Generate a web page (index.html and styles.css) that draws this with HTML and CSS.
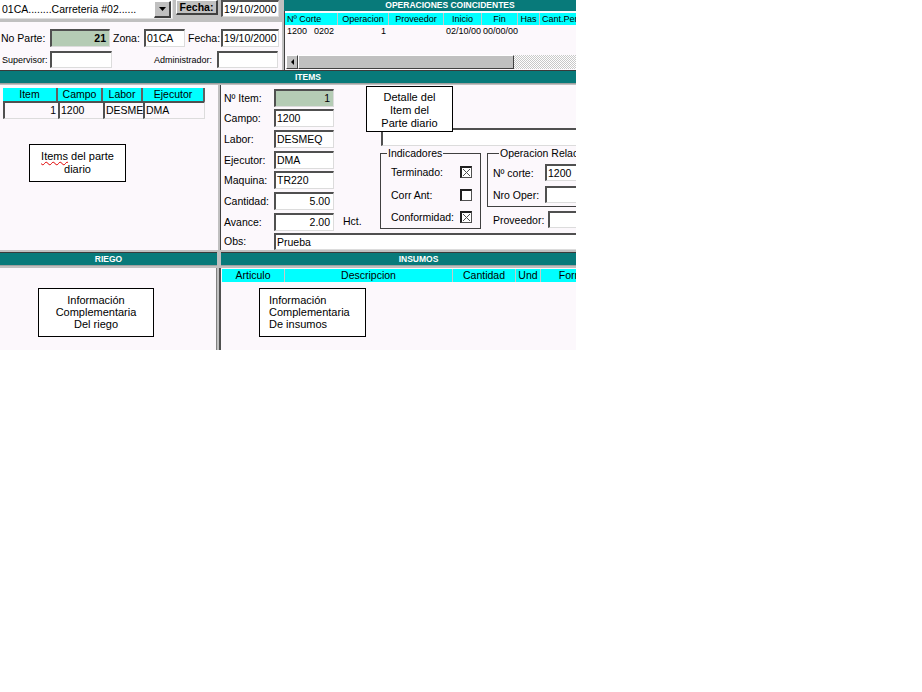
FILE: index.html
```html
<!DOCTYPE html>
<html lang="es">
<head>
    <meta charset="UTF-8">
    <title>Parte diario</title>
    <link rel="stylesheet" href="styles.css">
</head>
<body>
<div class="screen">
    <div class="app">

        <!-- cabecera del parte + operaciones -->
        <div class="top">
            <div class="parte">
                <div class="toolbar">
                    <div class="combo">
                        <span class="combo-text">01CA........Carreteria #02......</span>
                        <span class="combo-btn"><svg width="7" height="4" viewBox="0 0 7 4"><polygon points="0,0 7,0 3.5,4" fill="#000"/></svg></span>
                    </div>
                    <div class="btn">Fecha:</div>
                    <div class="field date">19/10/2000</div>
                </div>
                <div class="parte-body">
                    <div class="parte-row">
                        <span class="lbl lbl-parte">No Parte:</span>
                        <div class="field green num w-parte"><b>21</b></div>
                        <span class="lbl lbl-zona">Zona:</span>
                        <div class="field w-zona">01CA</div>
                        <span class="lbl lbl-fecha">Fecha:</span>
                        <div class="field w-fecha">19/10/2000</div>
                    </div>
                    <div class="parte-row second">
                        <span class="lbl lbl-sup">Supervisor:</span>
                        <div class="field w-sup"></div>
                        <span class="lbl lbl-adm">Administrador:</span>
                        <div class="field w-adm"></div>
                    </div>
                </div>
            </div>

            <div class="ops">
                <div class="bar bar-ops">OPERACIONES COINCIDENTES</div>
                <div class="ops-grid">
                    <div class="ops-head">
                        <span class="left">Nº Corte</span>
                        <span>Operacion</span>
                        <span>Proveedor</span>
                        <span>Inicio</span>
                        <span>Fin</span>
                        <span>Has</span>
                        <span class="left">Cant.Per</span>
                    </div>
                    <div class="ops-row">
                        <span class="left">1200<span class="sub">0202</span></span>
                        <span class="right">1</span>
                        <span></span>
                        <span class="left">02/10/00</span>
                        <span class="tight">00/00/00</span>
                        <span></span>
                        <span></span>
                    </div>
                    <div class="hscroll">
                        <span class="sb-btn"><svg width="3" height="6" viewBox="0 0 3 6"><polygon points="3,0 3,6 0,3" fill="#000"/></svg></span>
                        <span class="sb-thumb"></span>
                        <span class="sb-track"></span>
                    </div>
                </div>
            </div>
        </div>

        <!-- items -->
        <div class="bar items-bar">ITEMS</div>
        <div class="items">
            <div class="items-list">
                <div class="igrid">
                    <span class="ih">Item</span>
                    <span class="ih">Campo</span>
                    <span class="ih">Labor</span>
                    <span class="ih">Ejecutor</span>
                    <span class="ic num">1</span>
                    <span class="ic">1200</span>
                    <span class="ic">DESME</span>
                    <span class="ic last">DMA</span>
                </div>
                <div class="note note-items"><span class="spell">Items</span> del parte<br>diario</div>
            </div>

            <div class="items-detail">
                <div class="detail-top">
                    <div class="fields">
                        <span class="lbl">Nº Item:</span>
                        <div class="field green num">1</div>
                        <span class="lbl">Campo:</span>
                        <div class="field">1200</div>
                        <span class="lbl">Labor:</span>
                        <div class="field">DESMEQ</div>
                        <span class="lbl">Ejecutor:</span>
                        <div class="field">DMA</div>
                        <span class="lbl">Maquina:</span>
                        <div class="field">TR220</div>
                        <span class="lbl">Cantidad:</span>
                        <div class="field num">5.00</div>
                        <span class="lbl">Avance:</span>
                        <div class="field num">2.00</div>
                    </div>
                    <div class="hct">Hct.</div>
                    <div class="detail-right">
                        <div class="field line-box"></div>
                        <div class="groups">
                            <fieldset class="grp grp-ind">
                                <legend>Indicadores</legend>
                                <div class="chk-row">
                                    <span>Terminado:</span>
                                    <span class="chk"><svg width="9" height="9" viewBox="0 0 9 9"><path d="M1 1L8 8M8 1L1 8" stroke="#505050" stroke-width="1"/></svg></span>
                                </div>
                                <div class="chk-row">
                                    <span>Corr Ant:</span>
                                    <span class="chk"></span>
                                </div>
                                <div class="chk-row">
                                    <span>Conformidad:</span>
                                    <span class="chk"><svg width="9" height="9" viewBox="0 0 9 9"><path d="M1 1L8 8M8 1L1 8" stroke="#505050" stroke-width="1"/></svg></span>
                                </div>
                            </fieldset>
                            <div class="grp-col">
                                <fieldset class="grp grp-op">
                                    <legend>Operacion Relacionada</legend>
                                    <div class="op-row">
                                        <span class="lbl">Nº corte:</span>
                                        <div class="field">1200</div>
                                    </div>
                                    <div class="op-row">
                                        <span class="lbl">Nro Oper:</span>
                                        <div class="field"></div>
                                    </div>
                                </fieldset>
                                <div class="prov-row">
                                    <span class="lbl">Proveedor:</span>
                                    <div class="field"></div>
                                </div>
                            </div>
                        </div>
                    </div>
                </div>
                <div class="obs-row">
                    <span class="lbl">Obs:</span>
                    <div class="field obs">Prueba</div>
                </div>
                <div class="note note-detail">Detalle del<br>Item del<br>Parte diario</div>
            </div>
        </div>

        <!-- riego / insumos -->
        <div class="bottom">
            <div class="riego">
                <div class="bar">RIEGO</div>
                <div class="panel riego-panel">
                    <div class="note note-riego">Información<br>Complementaria<br>Del riego</div>
                </div>
            </div>
            <div class="insumos">
                <div class="bar">INSUMOS</div>
                <div class="panel insumos-panel">
                    <div class="ins-head">
                        <span>Articulo</span>
                        <span>Descripcion</span>
                        <span>Cantidad</span>
                        <span>Und</span>
                        <span>Formula</span>
                    </div>
                    <div class="note note-ins">Información<br>Complementaria<br>De insumos</div>
                </div>
            </div>
        </div>

    </div>
</div>
</body>
</html>
```

FILE: styles.css
```css
body {
    margin: 0;
    background: #fff;
    font-family: "Liberation Sans", Arial, sans-serif;
    font-size: 10.5px;
    color: #000;
}

.screen {
    width: 576px;
    height: 350px;
    overflow: hidden;
    background: #c0c0c0;
}

/* the original window is a bit wider than the capture */
.app {
    width: 616px;
    height: 350px;
    display: flex;
    flex-direction: column;
}

/* common controls */
.field {
    box-sizing: border-box;
    height: 18px;
    background: #fff;
    border-style: solid;
    border-width: 2px 1px 1px 2px;
    border-color: #505050 #dcdcdc #dcdcdc #505050;
    padding: 0 1px;
    line-height: 15px;
    white-space: nowrap;
    overflow: hidden;
}

.field.num {
    text-align: right;
    padding-right: 3px;
}

.field.green {
    background: #b5ccb5;
}

.lbl {
    white-space: nowrap;
}

.bar {
    height: 12px;
    line-height: 12px;
    background: #087a7a;
    color: #fff;
    font-size: 8.5px;
    font-weight: bold;
    text-align: center;
    border-top: 1px solid #3a3a3a;
    border-bottom: 1px solid #a0a0a0;
}

.panel {
    background: #fcf8fc;
}

.note {
    position: absolute;
    box-sizing: border-box;
    background: #fff;
    border: 1px solid #000;
    font-size: 11px;
    line-height: 13px;
    text-align: center;
}

/* top area */
.top {
    display: flex;
    gap: 2px;
    height: 70px;
}

.parte {
    width: 282px;
    display: flex;
    flex-direction: column;
}

.toolbar {
    height: 22px;
    display: flex;
    align-items: flex-start;
}

.combo {
    box-sizing: border-box;
    width: 173px;
    height: 19px;
    background: #fff;
    border-right: 1px solid #e0e0e0;
    border-bottom: 1px solid #e0e0e0;
    display: flex;
    align-items: center;
    justify-content: space-between;
}

.combo-text {
    padding-left: 2px;
    white-space: nowrap;
}

.combo-btn {
    box-sizing: border-box;
    width: 17px;
    height: 17px;
    margin-right: 1px;
    background: #c0c0c0;
    border-style: solid;
    border-width: 1px 2px 2px 1px;
    border-color: #fff #404040 #404040 #fff;
    display: flex;
    align-items: center;
    justify-content: center;
}

.btn {
    box-sizing: border-box;
    width: 42px;
    height: 15px;
    margin-left: 3px;
    background: #c0c0c0;
    border-style: solid;
    border-width: 1px 2px 2px 1px;
    border-color: #fff #404040 #404040 #fff;
    font-weight: bold;
    text-align: center;
    line-height: 12px;
}

.date {
    width: 58px;
    height: 17px;
    margin-left: 3px;
    line-height: 14px;
}

.parte-body {
    flex: 1;
    box-sizing: border-box;
    padding-top: 7px;
    background: #fcf8fc;
}

.parte-row {
    display: flex;
    align-items: center;
    height: 18px;
}

.parte-row.second {
    height: 17px;
    margin-top: 4px;
    font-size: 9px;
}

.parte-row.second .field {
    height: 17px;
}

.lbl-parte { width: 49px; padding-left: 1px; }
.w-parte { width: 60px; }
.lbl-zona { width: 31px; margin-left: 3px; }
.w-zona { width: 41px; }
.lbl-fecha { width: 33px; margin-left: 3px; }
.w-fecha { width: 58px; }
.lbl-sup { width: 48px; padding-left: 2px; }
.w-sup { width: 62px; }
.lbl-adm { width: 100px; padding-right: 5px; text-align: right; }
.w-adm { width: 61px; }

/* operaciones coincidentes */
.ops {
    flex: 1;
    display: flex;
    flex-direction: column;
}

.bar-ops {
    height: 11px;
    line-height: 11px;
    border-top: 0;
    border-bottom: 0;
}

.ops-grid {
    flex: 1;
    display: flex;
    flex-direction: column;
    background: #fcf8fc;
    border-left: 1px solid #404040;
    font-size: 9px;
}

.ops-head,
.ops-row {
    display: grid;
    grid-template-columns: 53px 51px 55px 38px 36px 22px 1fr;
}

.ops-head {
    margin-top: 2px;
    height: 12px;
    line-height: 12px;
    background: #00ffff;
}

.ops-head span {
    text-align: center;
    border-right: 1px solid #c8c8c8;
    white-space: nowrap;
}

.ops-row {
    height: 13px;
    line-height: 13px;
    white-space: nowrap;
}

.ops-head .left,
.ops-row .left {
    text-align: left;
    padding-left: 2px;
}

.ops-row .right {
    text-align: right;
    padding-right: 3px;
}

.ops-row .tight {
    padding-left: 1px;
}

.ops-row .sub {
    margin-left: 7px;
}

.hscroll {
    margin-top: auto;
    margin-bottom: 1px;
    height: 14px;
    display: flex;
}

.sb-btn,
.sb-thumb {
    box-sizing: border-box;
    background: #c0c0c0;
    border: 1px solid;
    border-color: #fff #404040 #404040 #fff;
}

.sb-btn {
    width: 12px;
    margin-left: 1px;
    display: flex;
    align-items: center;
    justify-content: center;
}

.sb-thumb {
    width: 216px;
}

.sb-track {
    flex: 1;
    background: repeating-conic-gradient(#c8c8c8 0 25%, #fff 0 50%) 0 0 / 2px 2px;
}

/* items */
.items {
    display: flex;
    gap: 2px;
    height: 165px;
    margin-top: 1px;
}

.items-list {
    position: relative;
    width: 218px;
    background: #fcf8fc;
}

.igrid {
    display: grid;
    grid-template-columns: 55px 45px 40px 62px;
    margin: 3px 0 0 3px;
    width: max-content;
}

.ih {
    box-sizing: border-box;
    height: 13px;
    line-height: 13px;
    background: #00ffff;
    text-align: center;
    border-right: 2px solid #606060;
}

.ic {
    box-sizing: border-box;
    height: 18px;
    line-height: 15px;
    padding: 0 1px;
    border-style: solid;
    border-width: 2px 0 1px 2px;
    border-color: #505050 #dcdcdc #dcdcdc #505050;
    white-space: nowrap;
    overflow: hidden;
}

.ic.num {
    text-align: right;
    padding-right: 2px;
}

.ic.last {
    border-right-width: 1px;
}

.note-items {
    left: 29px;
    top: 59px;
    width: 97px;
    height: 38px;
    padding-top: 5px;
}

.spell {
    text-decoration: underline wavy #e00000;
    text-decoration-thickness: 1px;
    text-underline-offset: 1px;
}

.items-detail {
    position: relative;
    flex: 1;
    display: flex;
    flex-direction: column;
    padding: 3px 0 0 3px;
    background: #fcf8fc;
    border-left: 1px solid #404040;
}

.detail-top {
    display: flex;
}

.fields {
    display: grid;
    grid-template-columns: 50px 60px;
    grid-auto-rows: 19px;
    row-gap: 1.7px;
    align-items: center;
}

.hct {
    width: 37px;
    padding: 124.2px 0 0 9px;
    line-height: 19px;
}

.detail-right {
    flex: 1;
    display: flex;
    flex-direction: column;
}

.line-box {
    margin: 40px 0 0 1px;
    border-right: 0;
}

.groups {
    display: flex;
    gap: 6px;
    margin-top: 1px;
}

.grp {
    box-sizing: border-box;
    min-width: 0;
    margin: 0;
    padding: 0;
    border: 1px solid #404040;
}

.grp legend {
    margin-left: 6px;
    padding: 0 1px;
    line-height: 12px;
    white-space: nowrap;
}

.grp-ind {
    width: 101px;
    height: 82px;
    padding-top: 2px;
}

.chk-row {
    display: grid;
    grid-template-columns: 69px 12px;
    align-items: center;
    height: 22.5px;
    padding-left: 10px;
}

.chk {
    box-sizing: border-box;
    width: 12px;
    height: 12px;
    background: #fff;
    border-style: solid;
    border-width: 2px 1px 1px 2px;
    border-color: #202020 #505050 #505050 #202020;
    display: flex;
}

.grp-col {
    display: flex;
    flex-direction: column;
}

.grp-op {
    width: 125px;
    height: 60px;
    padding: 5px 0 0 5px;
}

.op-row {
    display: flex;
    align-items: center;
    height: 17px;
    margin-bottom: 5px;
}

.op-row .lbl {
    width: 52px;
}

.op-row .field,
.prov-row .field {
    width: 60px;
    height: 17px;
}

.prov-row {
    display: flex;
    align-items: center;
    height: 17px;
    margin-top: 4px;
    padding-left: 6px;
}

.prov-row .lbl {
    width: 55px;
}

.obs-row {
    display: flex;
    align-items: center;
    height: 17px;
    margin-top: 1.7px;
}

.obs-row .lbl {
    width: 50px;
}

.field.obs {
    flex: 1;
    height: 17px;
    border-right: 0;
}

.note-detail {
    left: 145px;
    top: 1px;
    width: 87px;
    height: 46px;
    padding-top: 4px;
}

/* riego / insumos */
.bottom {
    flex: 1;
    display: flex;
    gap: 4px;
    min-height: 0;
}

.riego {
    width: 217px;
    display: flex;
    flex-direction: column;
}

.insumos {
    flex: 1;
    display: flex;
    flex-direction: column;
}

.bottom .bar {
    margin-top: 2px;
}

.bottom .panel {
    position: relative;
    flex: 1;
    margin-top: 2px;
}

.riego-panel {
    border-right: 1px solid #808080;
}

.insumos-panel {
    padding-top: 1px;
    box-shadow: -2px 0 0 #505050;
}

.ins-head {
    display: grid;
    grid-template-columns: 63px 168px 63px 25px 75px;
    margin-left: 1px;
    height: 13px;
    line-height: 13px;
    background: #00ffff;
}

.ins-head span {
    text-align: center;
    border-right: 1px solid #c8c8c8;
}

.note-riego,
.note-ins {
    left: 38px;
    top: 20px;
    height: 49px;
    padding-top: 5px;
    line-height: 12px;
}

.note-riego {
    width: 116px;
}

.note-ins {
    width: 107px;
    padding-left: 9px;
    text-align: left;
}
```
